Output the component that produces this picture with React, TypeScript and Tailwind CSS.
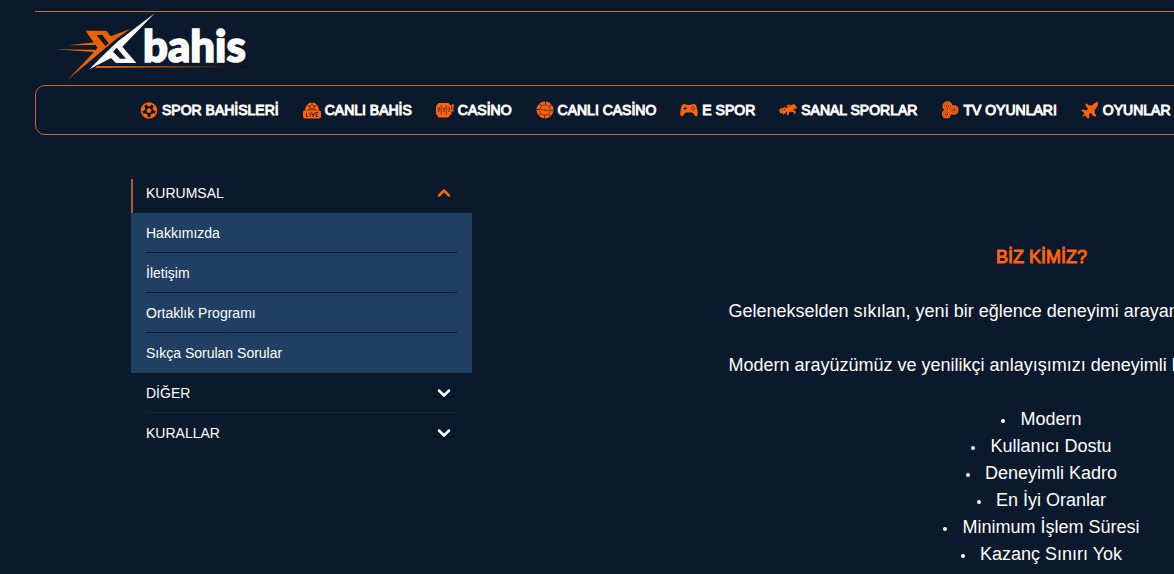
import { useState } from "react";
import type { ReactNode } from "react";
import { ChevronDown, ChevronUp } from "lucide-react";
import { FaFutbol } from "react-icons/fa";

const DARK = "#0a192b";

function Icon({ children }: { children: ReactNode }) {
  return (
    <svg viewBox="0 0 18 18" className="h-[18px] w-[18px] shrink-0" fill="currentColor" aria-hidden="true">
      {children}
    </svg>
  );
}

function LiveIcon() {
  return (
    <Icon>
      <path d="M2 9a7 7.6 0 0 1 14 0z" />
      <path d="M9 3.6 11.4 5.3 10.5 8h-3l-.9-2.7zM9 1.4v2.2M11.4 5.3l2.4-1M6.6 5.3l-2.4-1M7.5 8 5 9M10.5 8 13 9" fill="none" stroke={DARK} strokeWidth="0.7" />
      <rect x="0" y="9.3" width="18" height="8.2" rx="2" />
      <path d="M3.5 11.5v4h2M7.2 11.5v4M8.7 11.5l1.4 4 1.4-4M15.2 11.5H13v4h2.2M13 13.5h1.8" fill="none" stroke={DARK} strokeWidth="0.8" />
    </Icon>
  );
}

function SlotIcon() {
  return (
    <Icon>
      <path d="M2.5 2h10L14 4H1zM1 14h13l-1.5 2.4h-10z" />
      <rect x="0" y="4" width="15.5" height="10" rx="1.5" />
      <path d="M15 9h1.2V5.5h1.3v5H15z" />
      <circle cx="16.7" cy="4.6" r="1.3" />
      <path d="M5.2 4v10M10.3 4v10" stroke={DARK} strokeWidth="0.6" />
      <path d="M1.5 7.2h2.2L2.4 11M6.6 7.2h2.2L7.5 11M11.6 7.2h2.2L12.5 11" fill="none" stroke={DARK} strokeWidth="0.7" />
    </Icon>
  );
}

function ChipIcon() {
  return (
    <Icon>
      <circle cx="9" cy="9" r="8.5" />
      <circle cx="9" cy="9" r="5.2" fill="none" stroke={DARK} strokeWidth="0.6" />
      <circle cx="9" cy="9" r="7" fill="none" stroke={DARK} strokeWidth="3" strokeDasharray="0.7 4.798" />
      <path d="M6 9.8V8.2h1.5M8.3 8.2h1.4v1.6H8.3zM10.6 9.8H12V8.2" fill="none" stroke={DARK} strokeWidth="0.5" />
    </Icon>
  );
}

function PadIcon() {
  return (
    <Icon>
      <path d="M4.5 3C6 3 6.3 4 7.5 4h3c1.2 0 1.5-1 3-1 2.3 0 3 2 3.7 5 .5 2.4 1.2 7-.9 7.2-1.9.2-2.8-3.7-4.6-3.7H6.3c-1.8 0-2.7 3.9-4.6 3.7C-.4 15 .3 10.4.8 8c.7-3 1.4-5 3.7-5z" />
      <path d="M5 5.8v3.4M3.3 7.5h3.4" stroke={DARK} strokeWidth="1" />
      <circle cx="13" cy="7.5" r="1.5" fill="none" stroke={DARK} strokeWidth="0.6" />
    </Icon>
  );
}

function HorseIcon() {
  return (
    <Icon>
      <path d="M7 7.2c1.5-1.700 3.5-1.400 5-2.600 1-.9 2.700-1.700 3.800-1L18 6.500l-.6 1.300-2.200-.3-.7 1.800 2.300 1.200-.4 2.500-1.400-.3v-1.200l-2.500-.8-2 .3-1.200 2.900-1.700.5.5-3.600L6.500 11z" />
      <path d="M0 9.2 2.5 6.8l1.2.8L5.5 5.8l2.3 2.6-.8 3.1-2.5 2.2-1.2-1.8-1.7.5z" />
      <path d="m7 5.500 2-2 3 .6-2.5 1.4z" />
      <path d="M2.5 8.8 4.5 10M5.2 7.6l.6 2.4" stroke={DARK} strokeWidth="0.5" />
    </Icon>
  );
}

function BallsIcon() {
  return (
    <Icon>
      <circle cx="6.5" cy="5.2" r="5" />
      <circle cx="12.8" cy="9" r="4.8" />
      <circle cx="5.5" cy="13" r="4.6" />
      <path d="M5 6h6v7H5z" />
      <g fill="none" stroke={DARK} strokeWidth="0.5">
        <circle cx="6.5" cy="5.2" r="3.2" strokeDasharray="1.3 1" />
        <circle cx="6.5" cy="5.2" r="1.3" />
        <circle cx="12.8" cy="9" r="3" strokeDasharray="1.3 1" />
        <circle cx="12.8" cy="9" r="1.2" />
        <circle cx="5.5" cy="13" r="3" strokeDasharray="1.3 1" />
        <circle cx="5.5" cy="13" r="1.2" />
      </g>
    </Icon>
  );
}

function JetIcon() {
  return (
    <Icon>
      <path d="M17.2 1c-2.3.2-4.4 1.4-6.1 3.5L7.5 4.3 6 2.6l-1.5.5.6 2.7 2 2-1.5 1.7-3.5-1L0 9.6l3 2.2.2 1.3L.8 16l3.6-1.5.6 1.2 2.2 2 1.2-1.4-.4-3 2-1.5 1.8 2.9 2.5 1.1 1-1.2-1.5-2-.2-3.6c2-1.8 3.6-4.4 3.6-8z" />
    </Icon>
  );
}

function Logo() {
  return (
    <svg viewBox="72 36 588 207" className="h-[69px] w-[196px]" role="img" aria-label="Xbahis">
      <defs>
        <linearGradient id="underline" x1="0" x2="1">
          <stop offset="0" stopColor="#ea640c" />
          <stop offset="0.5" stopColor="#8a4212" />
          <stop offset="1" stopColor="#05080d" />
        </linearGradient>
        <linearGradient id="flare" x1="0" y1="1" x2="1" y2="0">
          <stop offset="0" stopColor="#a8480f" />
          <stop offset="0.4" stopColor="#f0690c" />
          <stop offset="1" stopColor="#d85b0b" />
        </linearGradient>
      </defs>
      <path
        d="M166 92H229L242 109 302 86 260 116 230 141 198 168 110 242 187 161 203 143zM200 105 226 138 236 130 217 105z"
        fill="url(#flare)"
        fillRule="evenodd"
      />
      <path d="m115 136 80-9 7 8zM74 148l120 1 8 8z" fill="#e8630c" />
      <path
        d="M374 40 277 140 319 189H258L243 174 178 208 226 160 262 125zM260 143 249 155 270 176H288z"
        fill="#fff"
        fillRule="evenodd"
      />
      <path d="M202 198H655V202L195 204z" fill="url(#underline)" />
      <text
        x="339"
        y="187"
        fontSize="131"
        fontWeight="900"
        fill="#fff"
        stroke="#fff"
        strokeWidth="5"
        className="font-[Lato,sans-serif]"
      >
        bahis
      </text>
    </svg>
  );
}

const navItems = [
  { label: "SPOR BAHİSLERİ", icon: <FaFutbol className="h-[17px] w-[18px] shrink-0" /> },
  { label: "CANLI BAHİS", icon: <LiveIcon /> },
  { label: "CASİNO", icon: <SlotIcon /> },
  { label: "CANLI CASİNO", icon: <ChipIcon /> },
  { label: "E SPOR", icon: <PadIcon /> },
  { label: "SANAL SPORLAR", icon: <HorseIcon /> },
  { label: "TV OYUNLARI", icon: <BallsIcon /> },
  { label: "OYUNLAR", icon: <JetIcon /> },
];

const sections = [
  { title: "KURUMSAL", links: ["Hakkımızda", "İletişim", "Ortaklık Programı", "Sıkça Sorulan Sorular"] },
  { title: "DİĞER", links: [] },
  { title: "KURALLAR", links: [] },
];

const features = [
  "Modern",
  "Kullanıcı Dostu",
  "Deneyimli Kadro",
  "En İyi Oranlar",
  "Minimum İşlem Süresi",
  "Kazanç Sınırı Yok",
  "Hızlı ve Kolay Para Yatırma ve Çekme",
];

function Sidebar() {
  const [open, setOpen] = useState("KURUMSAL");

  return (
    <aside className="w-[341px] shrink-0 text-sm">
      {sections.map((section, i) => {
        const active = open === section.title;
        return (
          <div key={section.title}>
            <button
              type="button"
              aria-expanded={active}
              onClick={() => setOpen(active ? "" : section.title)}
              className="flex h-10 w-full items-end text-left"
            >
              <span className={active ? "h-[34px] w-0.5 bg-[#a85c34]" : "h-[34px] w-0.5"} />
              <span
                className={
                  i === 1
                    ? "ml-[13px] mr-[15px] flex h-10 flex-1 items-center justify-between border-b border-[#14253a]"
                    : "ml-[13px] mr-[15px] flex h-10 flex-1 items-center justify-between"
                }
              >
                {section.title}
                {active ? (
                  <ChevronUp className="mr-[3px] text-[#f5660f]" size={20} strokeWidth={3} />
                ) : (
                  <ChevronDown className="mr-[3px]" size={20} strokeWidth={3} />
                )}
              </span>
            </button>
            {active && section.links.length > 0 && (
              <ul className="bg-[#203f62] px-[15px]">
                {section.links.map((link) => (
                  <li key={link} className="h-10 border-b border-[#0a192b] last:border-b-0">
                    <a href="#" className="block leading-10">
                      {link}
                    </a>
                  </li>
                ))}
              </ul>
            )}
          </div>
        );
      })}
    </aside>
  );
}

export default function App() {
  return (
    <div className="min-h-screen overflow-x-hidden bg-[#0a192b] font-['Liberation_Sans',Arial,sans-serif] text-white">
      <div className="min-w-[1718px]">
        <header className="px-[35px] pt-[11px]">
          <div className="border-t border-[#c56c38] pb-1 pl-[19px]">
            <a href="#" className="block w-[196px]">
              <Logo />
            </a>
          </div>
          <nav className="flex h-[50px] items-center gap-6 rounded-[10px] border border-[#c56c38] pl-[104px]">
            {navItems.map((item) => (
              <a key={item.label} href="#" className="flex items-center gap-1 whitespace-nowrap text-sm">
                <span className="text-[#ff6210]">{item.icon}</span>
                <span className="[-webkit-text-stroke:1px_white]">{item.label}</span>
              </a>
            ))}
          </nav>
        </header>

        <div className="flex px-[131px] pt-[38px]">
          <Sidebar />
          <main className="ml-6 flex-1 pt-[71px] text-center text-lg leading-[27px]">
            <h1 className="text-[#ff6210] [-webkit-text-stroke:1px_#ff6210]">BİZ KİMİZ?</h1>
            <div className="mx-auto mt-[27px] w-[626px] whitespace-nowrap text-left">
              <p className="mb-[27px]">Gelenekselden sıkılan, yeni bir eğlence deneyimi arayan</p>
              <p className="mb-7">Modern arayüzümüz ve yenilikçi anlayışımızı deneyimli k</p>
            </div>
            <ul className="list-inside list-disc text-sm leading-[27px]">
              {features.map((feature) => (
                <li key={feature}>
                  <span className="text-lg leading-5">{feature}</span>
                </li>
              ))}
            </ul>
          </main>
        </div>
      </div>
    </div>
  );
}
